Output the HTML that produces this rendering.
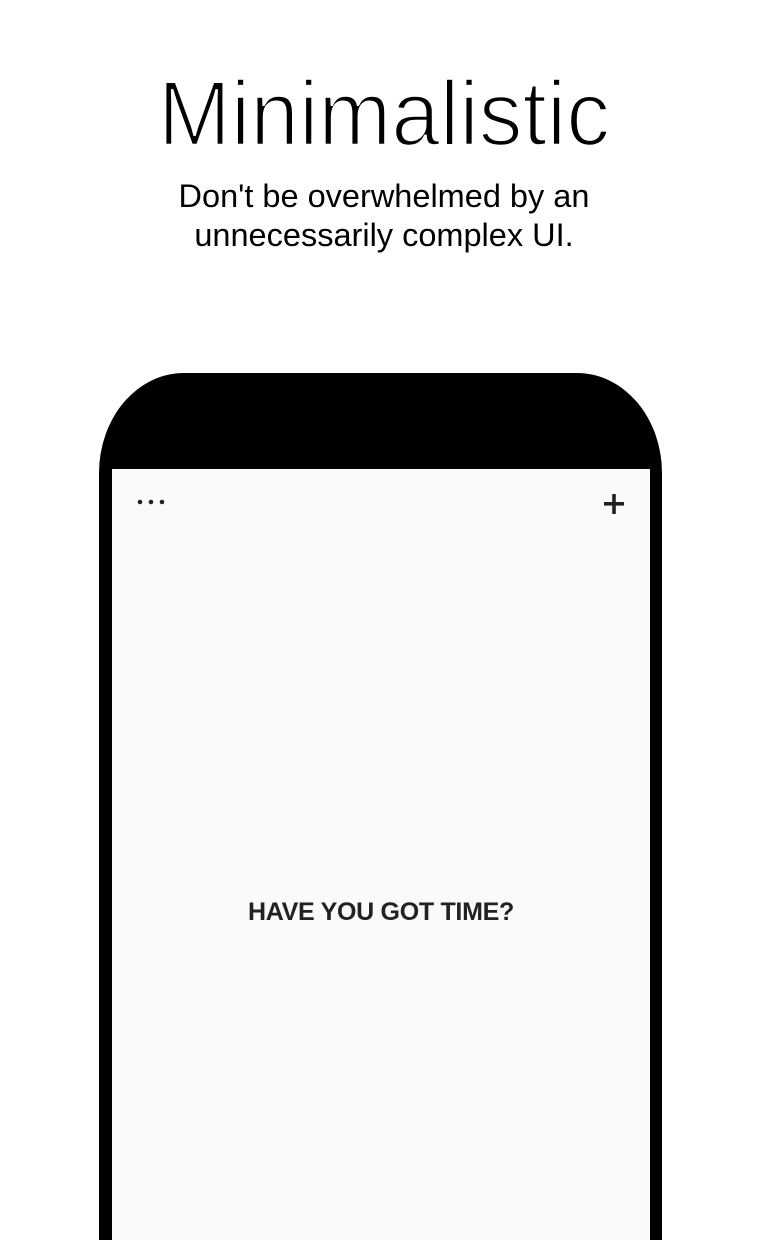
<!DOCTYPE html>
<html style="overflow:hidden;height:1240px"><head><style>
body{margin:0;width:768px;height:1240px;background:#fff;position:relative;overflow:hidden;font-family:"Liberation Sans",sans-serif}
.sub{position:absolute;top:177px;left:0;width:768px;text-align:center;font-size:32.5px;line-height:39px;color:#000}
.phone{position:absolute;left:99px;top:373px;width:563px;height:867px;background:#000;border-radius:85px 85px 0 0/100px 100px 0 0}
.screen{position:absolute;left:112px;top:469px;width:538px;height:771px;background:#fafafa}
.msg{position:absolute;left:112px;width:538px;top:898px;text-align:center;font-weight:bold;font-size:25px;color:#222;letter-spacing:-0.3px}
</style></head><body>
<svg style="position:absolute;left:0;top:0" width="768" height="170"><text x="158" y="145" font-family="Liberation Sans" font-size="92" textLength="452" lengthAdjust="spacingAndGlyphs" fill="#000" stroke="#fff" stroke-width="2.6">Minimalistic</text></svg>
<div class="sub">Don't be overwhelmed by an<br>unnecessarily complex UI.</div>
<div class="phone"></div>
<div class="screen">
<svg style="position:absolute;left:0;top:0" width="538" height="60">
<circle cx="28" cy="33" r="2.3" fill="#222"/><circle cx="39" cy="33" r="2.3" fill="#222"/><circle cx="50" cy="33" r="2.3" fill="#222"/>
<rect x="492" y="33" width="20" height="3.6" fill="#222"/><rect x="500.2" y="25" width="3.6" height="20" fill="#222"/>
</svg>
</div>
<div class="msg">HAVE YOU GOT TIME?</div>
</body></html>
